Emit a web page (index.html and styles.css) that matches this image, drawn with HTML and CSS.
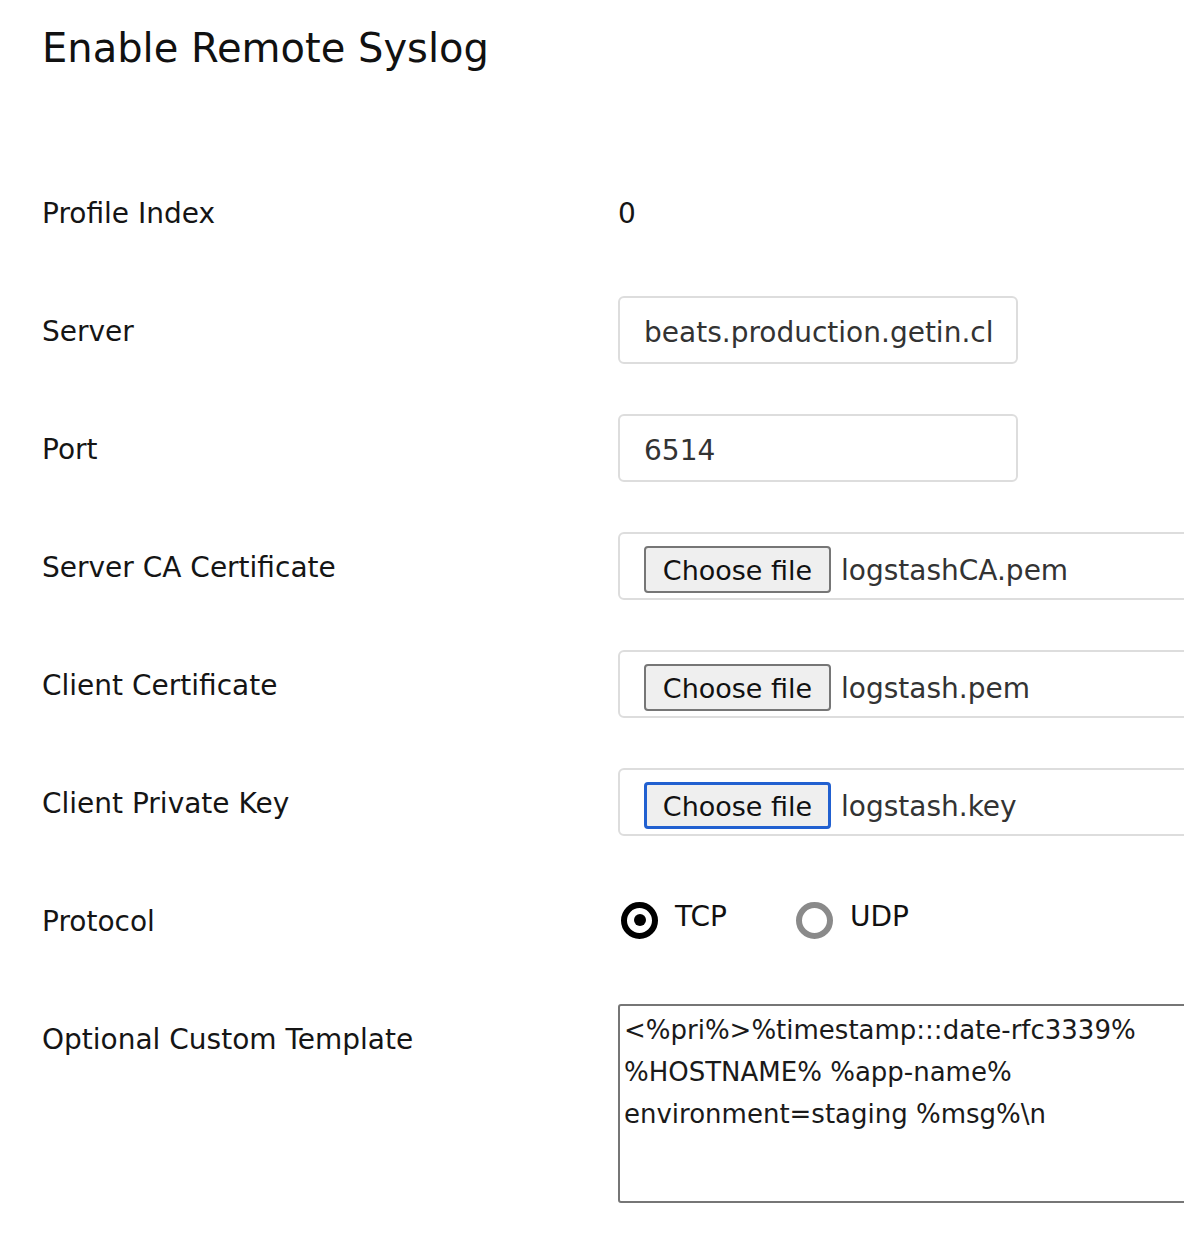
FILE: index.html
```html
<!DOCTYPE html>
<html lang="en">
<head>
<meta charset="utf-8">
<title>Enable Remote Syslog</title>
<link rel="stylesheet" href="styles.css">
</head>
<body>
<div class="page">
  <h1 class="title">Enable Remote Syslog</h1>
  <form class="form">
    <div class="label">Profile Index</div>
    <div class="value static">0</div>

    <div class="label">Server</div>
    <div class="value"><input class="text-input" type="text" value="beats.production.getin.cl"></div>

    <div class="label">Port</div>
    <div class="value"><input class="text-input" type="text" value="6514"></div>

    <div class="label">Server CA Certificate</div>
    <div class="value">
      <div class="file-box"><span class="file-btn">Choose file</span><span class="file-name">logstashCA.pem</span></div>
    </div>

    <div class="label">Client Certificate</div>
    <div class="value">
      <div class="file-box"><span class="file-btn">Choose file</span><span class="file-name">logstash.pem</span></div>
    </div>

    <div class="label">Client Private Key</div>
    <div class="value">
      <div class="file-box"><span class="file-btn focused">Choose file</span><span class="file-name">logstash.key</span></div>
    </div>

    <div class="label">Protocol</div>
    <div class="value radios">
      <label class="radio"><span class="dot checked"></span><span class="radio-text">TCP</span></label>
      <label class="radio"><span class="dot"></span><span class="radio-text">UDP</span></label>
    </div>

    <div class="label">Optional Custom Template</div>
    <div class="value"><textarea class="template"><%pri%>%timestamp:::date-rfc3339% %HOSTNAME% %app-name% environment=staging %msg%\n</textarea></div>
  </form>
</div>
</body>
</html>
```
FILE: styles.css
```css
html, body {
  margin: 0;
  padding: 0;
  background: #ffffff;
}
.page {
  font-family: "DejaVu Sans", "Liberation Sans", sans-serif;
  color: #111111;
  padding: 20px 0 20px 42px;
  overflow: hidden;
  width: 1142px;
}
.title {
  margin: 0;
  font-size: 40px;
  line-height: 56px;
  font-weight: normal;
  color: #111111;
}
.form {
  margin-top: 102px;
  display: grid;
  grid-template-columns: 576px 1fr;
  row-gap: 50px;
  align-items: start;
}
.label {
  font-size: 28px;
  line-height: 64px;
  padding-top: 4px;
  color: #151515;
}
.value {
  min-height: 68px;
}
.static {
  box-sizing: border-box;
  font-size: 28px;
  line-height: 64px;
  padding-top: 4px;
  color: #151515;
}
.text-input {
  box-sizing: border-box;
  display: block;
  width: 400px;
  height: 68px;
  border: 2px solid #dddddd;
  border-radius: 6px;
  padding: 4px 24px 0 24px;
  font-family: "DejaVu Sans", sans-serif;
  font-size: 28px;
  color: #333333;
  background: #ffffff;
  outline: none;
}
.file-box {
  box-sizing: border-box;
  width: 620px;
  height: 68px;
  border: 2px solid #dddddd;
  border-radius: 6px;
  padding: 11px 24px 0 24px;
  display: flex;
  align-items: flex-start;
  gap: 10px;
}
.file-btn {
  box-sizing: border-box;
  width: 187px;
  height: 47px;
  margin-top: 1px;
  border: 2px solid #767676;
  border-radius: 4px;
  background: #efefef;
  font-size: 27px;
  line-height: 45px;
  text-align: center;
  color: #111111;
}
.file-btn.focused {
  border: 3px solid #2160d0;
  line-height: 43px;
}
.file-name {
  font-size: 28px;
  line-height: 52px;
  color: #333333;
}
.radios {
  display: flex;
  align-items: center;
  height: 68px;
  padding-left: 3px;
}
.radio {
  display: flex;
  align-items: center;
  gap: 17px;
  margin-right: 69px;
}
.dot {
  box-sizing: border-box;
  width: 37px;
  height: 37px;
  border-radius: 50%;
  border: 6px solid #8a8a8a;
  display: flex;
  align-items: center;
  justify-content: center;
}
.dot.checked {
  border-color: #000000;
}
.dot.checked::after {
  content: "";
  width: 12px;
  height: 12px;
  border-radius: 50%;
  background: #000000;
}
.radio-text {
  font-size: 28px;
  line-height: 32px;
  margin-top: -6px;
  color: #111111;
}
.template {
  box-sizing: border-box;
  display: block;
  width: 620px;
  height: 199px;
  border: 2px solid #767676;
  border-radius: 3px;
  padding: 3px 4px;
  margin: 0;
  font-family: "DejaVu Sans", sans-serif;
  font-size: 26px;
  line-height: 42px;
  color: #1a1a1a;
  resize: none;
  outline: none;
}
```
